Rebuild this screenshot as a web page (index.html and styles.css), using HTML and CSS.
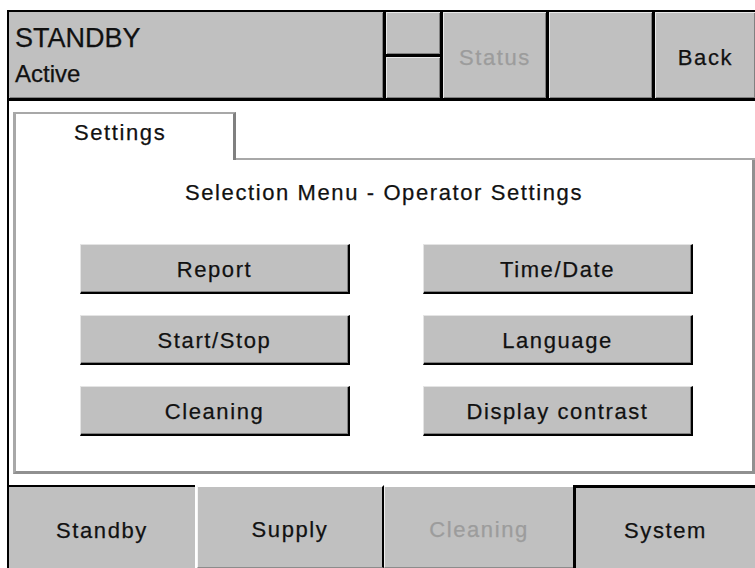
FILE: index.html
```html
<!DOCTYPE html>
<html lang="en">
<head>
    <meta charset="UTF-8">
    <meta name="viewport" content="width=device-width, initial-scale=1.0">
    <title>Operator Settings</title>
    <link rel="stylesheet" href="styles.css">
</head>
<body>
    <div class="screen">
        <!-- Durum satırı -->
        <div class="topbar">
            <div class="cell info">
                <div class="mode">STANDBY</div>
                <div class="state">Active</div>
            </div>
            <div class="split">
                <div class="cell"></div>
                <div class="cell"></div>
            </div>
            <div class="cell key disabled">Status</div>
            <div class="cell key"></div>
            <div class="cell key back">Back</div>
        </div>

        <!-- Ayar paneli -->
        <div class="panel">
            <div class="tabs">
                <div class="tab">Settings</div>
                <div class="tab-rest"></div>
            </div>
            <div class="page">
                <div class="heading">Selection Menu - Operator Settings</div>
                <div class="menu">
                    <div class="btn">Report</div>
                    <div class="btn">Time/Date</div>
                    <div class="btn">Start/Stop</div>
                    <div class="btn">Language</div>
                    <div class="btn">Cleaning</div>
                    <div class="btn">Display contrast</div>
                </div>
            </div>
        </div>

        <!-- Alt menü -->
        <div class="navbar">
            <div class="nav standby">Standby</div>
            <div class="nav supply">Supply</div>
            <div class="nav cleaning">Cleaning</div>
            <div class="nav system">System</div>
        </div>
    </div>
</body>
</html>
```

FILE: styles.css
```css
* {
    box-sizing: border-box;
}

html, body {
    margin: 0;
}

body {
    font-family: "Liberation Sans", Arial, sans-serif;
    background: #fff;
    color: #111;
    overflow: hidden;
    -webkit-text-stroke: 0.25px currentColor;
}

.screen {
    margin: 10px 0 0 7px;
    border-left: 2px solid #000;
    height: 558px;
    display: flex;
    flex-direction: column;
}

/* top bar */
.topbar {
    height: 91px;
    display: flex;
    gap: 3px;
    background: #000;
    padding: 2px 0 3px;
}

.cell {
    background: #c0c0c0;
    border-top: 1px solid #e8e8e8;
    border-left: 1px solid #e8e8e8;
    box-shadow: inset -1px -1px 0 #808080;
}

.info {
    width: 374px;
    padding: 10px 0 0 5px;
    border-color: #c0c0c0;
}

.mode {
    font-size: 27px;
    line-height: 30px;
}

.state {
    font-size: 24px;
    line-height: 28px;
    margin-top: 7px;
}

.split {
    width: 54px;
    display: grid;
    grid-template-rows: 1fr 1fr;
    gap: 3px;
}

.key {
    width: 103px;
    display: flex;
    align-items: center;
    justify-content: center;
    font-size: 22px;
    letter-spacing: 1.6px;
    padding-top: 4px;
}

.key.back {
    width: 100px;
}

.disabled {
    color: #9c9c9c;
}

/* settings panel */
.panel {
    margin: 11px 0 0 4px;
    height: 362px;
    display: flex;
    flex-direction: column;
}

.tabs {
    display: flex;
    height: 48px;
}

.tab {
    width: 223px;
    border-top: 2px solid #a8a8a8;
    border-left: 3px solid #a8a8a8;
    border-right: 3px solid #808080;
    padding: 7px 0 0 58px;
    font-size: 22px;
    line-height: 24px;
    letter-spacing: 1.6px;
}

.tab-rest {
    flex: 1;
    border-bottom: 2px solid #a8a8a8;
}

.page {
    flex: 1;
    border-left: 3px solid #a8a8a8;
    border-right: 3px solid #909090;
    border-bottom: 3px solid #909090;
    padding-top: 21px;
}

.heading {
    text-align: center;
    font-size: 22px;
    line-height: 24px;
    letter-spacing: 1.6px;
}

.menu {
    display: grid;
    grid-template-columns: 270px 270px;
    column-gap: 73px;
    row-gap: 21px;
    margin: 39px 0 0 64px;
}

.btn {
    height: 50px;
    background: #c0c0c0;
    border-top: 1px solid #e4e4e4;
    border-left: 1px solid #e4e4e4;
    border-right: 2px solid #000;
    border-bottom: 2px solid #000;
    box-shadow: inset -1px -1px 0 #808080;
    display: flex;
    align-items: center;
    justify-content: center;
    font-size: 22px;
    letter-spacing: 1.6px;
    padding-top: 3px;
}

/* bottom navigation */
.navbar {
    margin-top: 11px;
    height: 83px;
    display: flex;
}

.nav {
    display: flex;
    align-items: center;
    justify-content: center;
    background: #c0c0c0;
    font-size: 22px;
    letter-spacing: 1.6px;
    padding-top: 6px;
}

.standby {
    width: 186px;
    margin-right: 2px;
    border-top: 2px solid #000;
}

.supply {
    width: 187px;
    border-top: 2px solid #fff;
    border-left: 1px solid #f4f4f4;
    border-right: 2px solid #000;
    border-bottom: 1px solid #8c8c8c;
}

.cleaning {
    width: 189px;
    border-top: 2px solid #fff;
    border-left: 1px solid #eee;
    border-bottom: 1px solid #8c8c8c;
    color: #9c9c9c;
}

.system {
    flex: 1;
    border-top: 3px solid #000;
    border-left: 3px solid #000;
}
```
